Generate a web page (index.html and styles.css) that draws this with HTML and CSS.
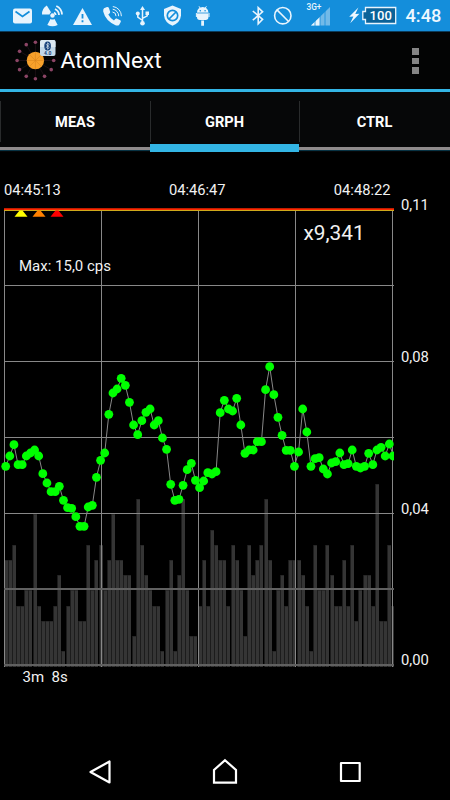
FILE: index.html
```html
<!DOCTYPE html>
<html lang="en">
<head>
<meta charset="utf-8">
<title>AtomNext</title>
<link rel="stylesheet" href="styles.css">
</head>
<body>
<header class="status">
  <svg class="status-icons" width="350" height="31" viewBox="0 0 350 31" fill="#e8f4fd">
    <rect x="13" y="8.5" width="19" height="15" rx="2"/>
    <path d="M15.5 11.5 22.5 16.5 29.5 11.5" fill="none" stroke="#148edb" stroke-width="1.7"/>
    <circle cx="52.5" cy="15.5" r="2.2"/>
    <path d="M49.5 14.5H42A10 10 0 0 1 46.8 5.5L51 12.3A4 4 0 0 0 49.5 14.5ZM50.5 19A4 4 0 0 0 54.5 19L57.7 25Q52.5 27.7 47.3 25Z"/>
    <path d="M54 12.5A3 3 0 0 1 55.7 15M55 9A7 7 0 0 1 59 15M56.3 6A10 10 0 0 1 62 14.5" fill="none" stroke="#e8f4fd" stroke-width="1.8"/>
    <path d="M82.5 8 92 25H73Z"/>
    <path d="M82.5 14v4.5M82.5 20.2v2" stroke="#148edb" stroke-width="1.8"/>
    <path d="M104 8.2 107 7Q108.6 6.8 109 8.2L110.2 12Q110.3 13.2 108.3 14.5Q110.5 18.6 114 20.4Q115.4 18 116.7 18.5L120.3 20.3Q121.3 21 120.7 22.1L119.2 24.7Q118.1 26.1 115.5 25.2Q105.5 20.8 103.2 11.5Q103 9.2 104 8.2Z"/>
    <path d="M112.5 12A4 4 0 0 1 116 16.2M112.7 9.2A7 7 0 0 1 118.7 16.2M112.8 6.5A9.7 9.7 0 0 1 121.4 16.2" fill="none" stroke="#e8f4fd" stroke-width="1"/>
    <path d="M142.5 9v14M142.5 20.5l-4.7-3.3v-3M142.5 18.3l4.7-2.5v-2.5" fill="none" stroke="#e8f4fd" stroke-width="1.5"/>
    <path d="m142.5 6 2.5 4h-5ZM145.5 11.4h3.5v3.5h-3.5Z"/><circle cx="137.8" cy="13.5" r="2"/><circle cx="142.5" cy="23.3" r="2.3"/>
    <path d="M172.5 5.5 181 9V15.5Q180.3 22.5 172.5 25.8Q164.7 22.5 164 15.5V9Z"/>
    <g fill="none" stroke="#148edb" stroke-width="1.7"><circle cx="172.5" cy="15.5" r="5.2"/><path d="m169 19 7-7"/></g>
    <path d="M197 12.5A5.7 5.5 0 0 1 208.4 12.5V17.3Q208.4 20 205.6 20H199.8Q197 20 197 17.3ZM201.2 20.6h2.8v5.2h-2.8Z"/>
    <path d="m199 6.3 1.8 2.8M206.4 6.3l-1.8 2.8M196.4 13v4M209 13v4" fill="none" stroke="#e8f4fd" stroke-width="1"/>
    <path d="M197 13h11.4" stroke="#148edb" stroke-width=".8"/><circle cx="200.3" cy="10.7" r=".8" fill="#148edb"/><circle cx="205.1" cy="10.7" r=".8" fill="#148edb"/>
    <path d="m252.8 11 9.8 8.4-4.4 4.4V7.6l4.4 4.2-9.8 8.4" fill="none" stroke="#e8f4fd" stroke-width="1.6"/>
    <g fill="none" stroke="#e8f4fd" stroke-width="1.6"><circle cx="282.8" cy="15.7" r="8.2"/><path d="m277 9.9 11.6 11.6"/></g>
    <path d="M330 7v18.5h-19Z" fill="#72bae8"/><path d="M320 17v8.5h-9Z"/>
    <path d="M315 20v6M320 16v10M325 11v15" stroke="#148edb" stroke-width=".8"/>
    <text x="306.5" y="10.2" font-size="8.3" font-weight="500">3G+</text>
  </svg>
  <svg class="battery" width="48" height="31" viewBox="0 0 48 31">
    <path d="M8.4 7.6-.8 16.7 3.4 16.4.2 23.2 9.4 13.8 5.3 14.1Z" fill="#eef8ff"/>
    <path d="M15.5 7.5h30.2v16H15.5v-4h-2.7v-8h2.7Z" fill="#0b6298" stroke="#e8f4fd" stroke-width="1.3"/>
    <text x="30.7" y="20" font-size="13" font-weight="500" text-anchor="middle" fill="#fff">100</text>
  </svg>
  <span class="clock">4:48</span>
</header>

<div class="appbar">
  <svg class="logo" width="44" height="44" viewBox="13 39 44 44">
    <g class="spokes"></g>
    <circle cx="35.4" cy="61.5" r="8.7" fill="#f8a12b"/>
    <path d="M35.4 53v17M27 61.5h17M29.4 55.5l12 12M41.4 55.5l-12 12" stroke="#d5801d" stroke-width=".5"/>
    <rect x="40" y="41" width="15.5" height="16" rx="2" fill="#c3d9e8"/>
    <path d="M42 41h11.5q2 0 2 2v5H40v-5q0-2 2-2Z" fill="#dce9f1"/>
    <ellipse cx="47.6" cy="47" rx="3.3" ry="4.6" fill="#143f78"/>
    <path d="m45.7 45 3.6 3.5-1.7 1.7v-6.4l1.7 1.6-3.6 3.6" fill="none" stroke="#dce9f1" stroke-width=".7"/>
    <text x="47.7" y="56.2" font-size="5" font-weight="700" text-anchor="middle" fill="#143f78">4.0</text>
  </svg>
  <h1 class="title">AtomNext</h1>
  <div class="overflow"><i></i><i></i><i></i></div>
</div>

<nav class="tabs">
  <div class="tab">MEAS</div>
  <div class="tab active">GRPH</div>
  <div class="tab">CTRL</div>
</nav>

<main class="graph">
  <div class="times"><span>04:45:13</span><span>04:46:47</span><span>04:48:22</span></div>
  <div class="plot-row">
    <svg class="plot" width="394" height="460" viewBox="0 207 394 460">
      <g class="bars"></g>
      <path d="M4.5 210V667M101.5 210V667M198.5 210V667M295.5 210V667M392.5 210V667M4 285.5H394M4 361.5H394M4 437.5H394M4 513.5H394" stroke="#888" fill="none"/>
      <path d="M4 589H394M4 665H394" stroke="#606060" stroke-width="2"/>
      <path d="M4 209.2H394" stroke="#ff2800" stroke-width="1.8"/>
      <path d="M4 210.5H394" stroke="#cfa91b"/>
      <path d="M19.5 210.5h3l5 6.2H14.5Z" fill="#ff0"/>
      <path d="M37.5 210.5h3l5 6.2H32.5Z" fill="#ff8000"/>
      <path d="M55.5 210.5h3l5 6.2H50.5Z" fill="red"/>
      <polyline class="line"/>
      <g class="dots"></g>
      <text x="19" y="271" font-size="15">Max: 15,0 cps</text>
      <text x="303.5" y="240" font-size="20.8">x9,341</text>
    </svg>
    <div class="levels"><span>0,11</span><span>0,08</span><span>0,04</span><span>0,00</span></div>
  </div>
  <p class="elapsed">3m&nbsp; 8s</p>
</main>

<footer class="navbar">
  <svg width="450" height="56" viewBox="0 744 450 56" fill="none" stroke="#fff" stroke-width="2.2" stroke-linejoin="round">
    <path d="M109.5 761.5V782.5L90.5 772Z"/>
    <path d="M225 760.2 236 770V782.6H214V770Z" stroke-linejoin="miter"/>
    <rect x="341" y="763" width="18.7" height="18"/>
  </svg>
</footer>
<script src="chart.js"></script>
</body>
</html>
```
FILE: styles.css
```css
* { box-sizing: border-box; }
body {
  margin: 0;
  width: 450px;
  height: 800px;
  display: flex;
  flex-direction: column;
  background: #000;
  color: #f2f2f2;
  font-family: Roboto, sans-serif;
  overflow: hidden;
}
svg { display: block; flex: none; }
.status {
  height: 32px;
  flex: none;
  display: flex;
  background: #148edb;
  border-bottom: 1px solid #0b3c5c;
}
.battery { overflow: visible; }
.clock {
  margin-left: 7.5px;
  font-size: 18.2px;
  font-weight: 500;
  line-height: 32px;
  color: #eef8ff;
}
.appbar {
  height: 60px;
  flex: none;
  display: flex;
  align-items: center;
  padding: 0 31px 2px 13px;
  background: #030404;
  border-bottom: 3px solid #33b5e5;
}
.title {
  margin: 2px 0 0 3.5px;
  flex: 1;
  font-size: 22.6px;
  font-weight: 400;
  color: #fff;
}
.overflow {
  display: flex;
  flex-direction: column;
  gap: 3px;
  margin-top: 3px;
}
.overflow i { width: 7px; height: 6.5px; background: #858585; }
.tabs {
  height: 60px;
  flex: none;
  display: grid;
  grid-template-columns: 150px 149px 151px;
  background: #060708;
}
.tab {
  display: flex;
  align-items: center;
  justify-content: center;
  font-size: 14.6px;
  font-weight: 700;
  color: #fff;
  border-bottom: 3px solid #8f8b8c;
  box-shadow: 0 1px #083344;
  margin-bottom: 2px;
  padding-top: 4px;
  background: linear-gradient(#292b2c, #292b2c) left 9px / 1px 41px no-repeat;
}
.tab.active {
  border-bottom: 8px solid #33b5e5;
  padding-top: 7px;
  margin-bottom: 0;
  box-shadow: none;
}
.graph { flex: 1; display: flex; flex-direction: column; }
.times {
  height: 55px;
  width: 394px;
  padding: 29px 3.5px 0 4px;
  display: flex;
  justify-content: space-between;
  font-size: 14.7px;
  line-height: 18px;
}
.plot-row { display: flex; height: 460px; }
.plot text { fill: #f2f2f2; }
.line { fill: none; stroke: #888; }
.levels {
  margin: -11px 0 -5px 7px;
  display: grid;
  grid-template-rows: 152px 152px 151px 18px;
  font-size: 14.8px;
  line-height: 18px;
}
.elapsed { margin: 1px 0 0 22.5px; font-size: 15px; line-height: 18px; white-space: pre; }
.navbar { height: 56px; flex: none; }
```
FILE: chart.js
```js
const NS = "http://www.w3.org/2000/svg";

function add(parent, name, attrs) {
  const el = document.createElementNS(NS, name);
  for (const key in attrs) el.setAttribute(key, attrs[key]);
  parent.appendChild(el);
}

// Dose readings, in thirds of a pixel below y = 355.
const readings = [
  334,303,269,329,329,303,294,285,303,356,384,410,410,394,436,458,460,485,514,514,
  456,451,367,316,294,178,114,102,70,91,142,210,239,197,172,162,210,197,249,283,
  388,436,433,391,344,325,376,398,378,353,357,350,173,136,162,168,130,210,295,285,
  285,260,260,104,35,119,187,241,286,286,334,291,162,231,334,311,308,342,357,324,
  320,294,329,326,285,334,339,334,295,329,285,277,303,267,303
];

// Counts per interval.
const counts = [
  7,7,8,4,4,5,5,10,4,3,3,3,4,6,1,4,5,5,3,3,8,5,7,8,5,7,10,7,7,6,6,2,11,8,6,5,4,4,1,5,
  7,1,6,11,5,2,2,4,7,4,9,8,7,7,4,8,7,5,2,8,6,7,8,11,7,1,5,6,4,7,7,7,6,4,1,8,5,5,8,6,
  4,4,7,4,8,3,5,6,6,4,12,3,3,8,4
];

const step = 4.125;
const x = i => 5.7 + i * step;

const bars = document.querySelector(".bars");
counts.forEach((n, i) => {
  const left = Math.max(4, Math.round(x(i) - 2));
  const top = Math.round(666.3 - n * 15.2);
  const width = Math.min(4, 394 - left);
  add(bars, "rect", { x: left, y: top, width, height: 667 - top, fill: "#1c1c1c" });
  add(bars, "rect", { x: left + 1, y: top + 0.5, width: Math.min(3, width - 1), height: 666.5 - top, fill: "#353535" });
});

const points = readings.map((v, i) => [x(i), 355 + v / 3]);
document.querySelector(".line").setAttribute("points", points.map(p => p.join()).join(" "));

const dots = document.querySelector(".dots");
points.forEach(([cx, cy]) => add(dots, "circle", { cx: Math.min(cx, 393), cy, r: 4.4, fill: "#0f0" }));

// Electrons on a 30-degree ring; the two behind the badge are left out.
const spokes = document.querySelector(".spokes");
for (let k = 0; k < 10; k++) {
  const a = k * 30 * Math.PI / 180;
  const cx = 35.4 + 18.3 * Math.cos(a), cy = 61.5 + 18.3 * Math.sin(a);
  add(spokes, "path", { d: `M35.4 61.5L${cx} ${cy}`, stroke: "#2a1820", "stroke-width": 0.6 });
  add(spokes, "circle", { cx, cy, r: 1.8, fill: "#8b4565" });
}
```
